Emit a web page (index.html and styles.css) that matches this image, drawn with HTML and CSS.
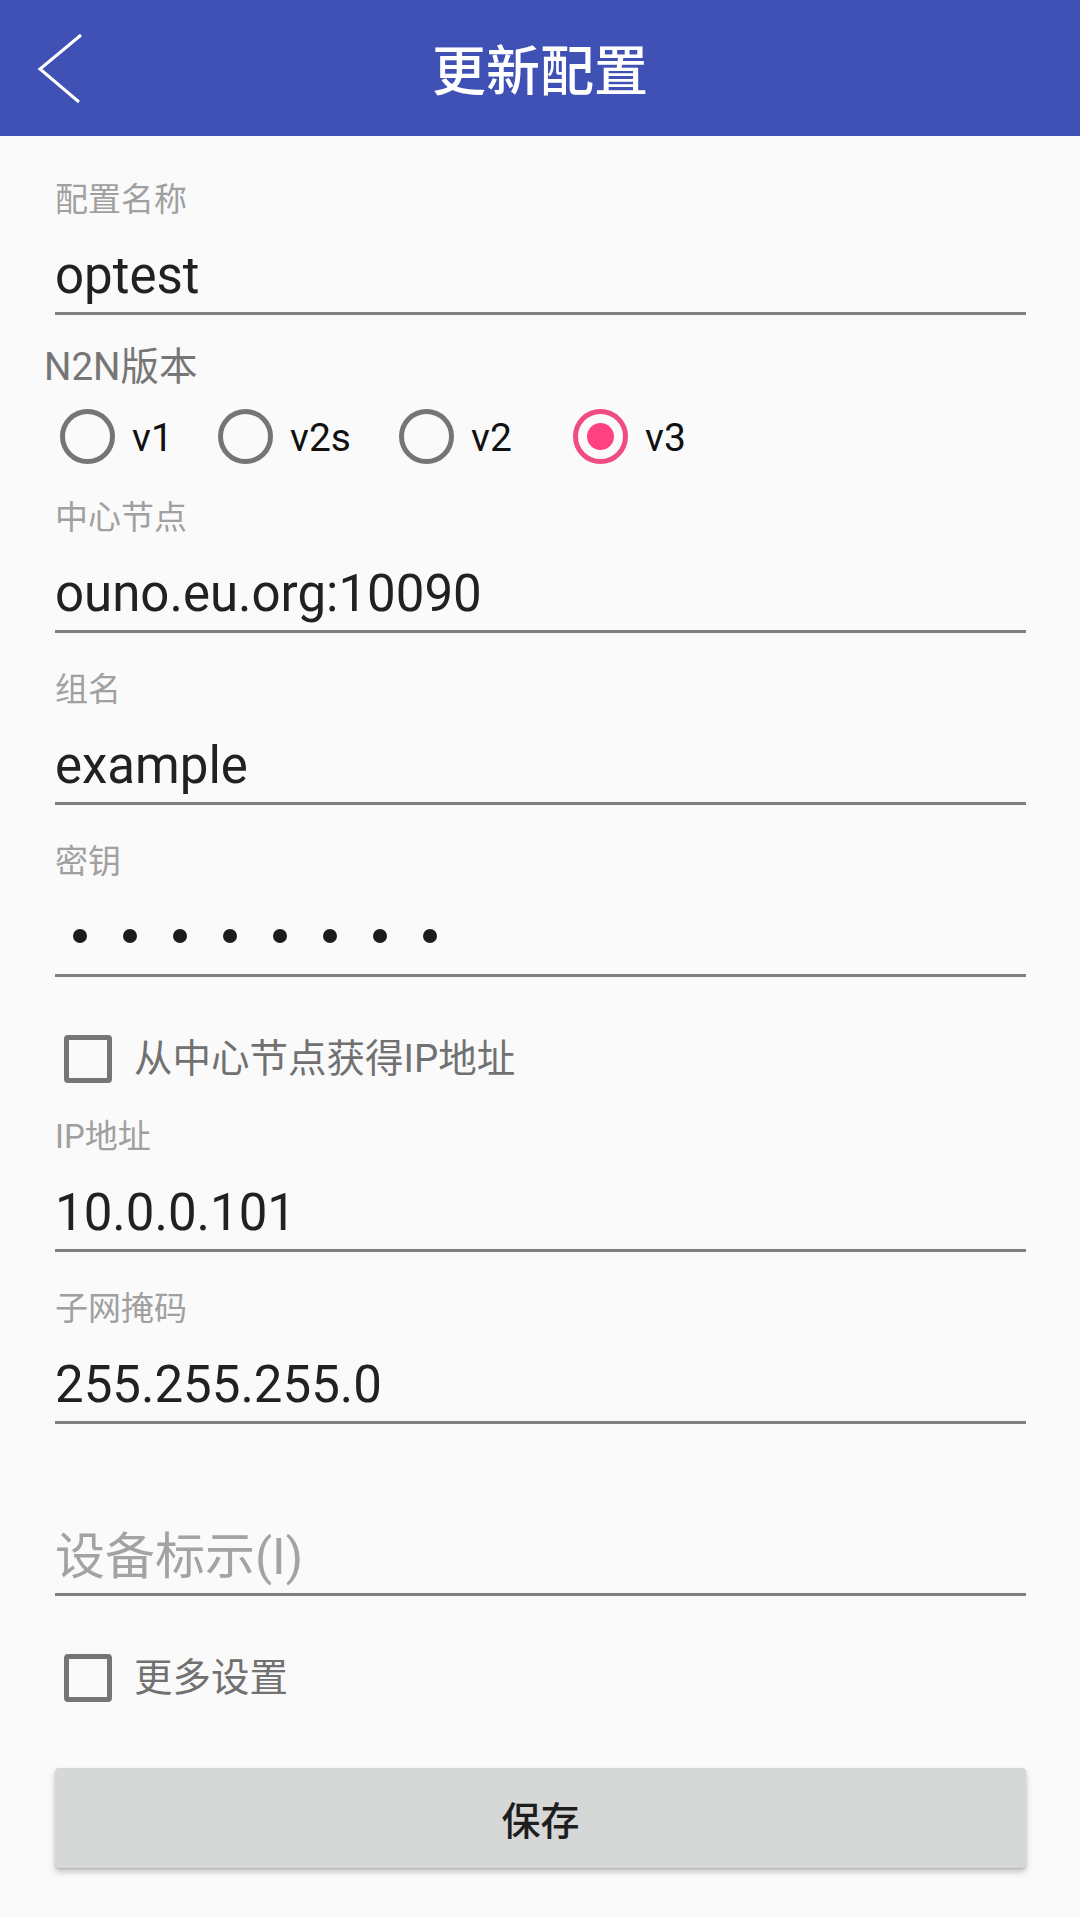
FILE: index.html
```html
<!DOCTYPE html>
<html lang="zh-CN">
<head>
<meta charset="utf-8">
<title>更新配置</title>
<link rel="stylesheet" href="styles.css">
</head>
<body>
<header class="appbar">
  <div class="appbar-left">
    <svg class="back" width="60" height="80" viewBox="0 0 60 80" aria-hidden="true">
      <polyline points="51,7 10,41 49,74" fill="none" stroke="#ffffff" stroke-width="3" stroke-linejoin="miter"/>
    </svg>
  </div>
  <h1 class="title">更新配置</h1>
  <div class="appbar-right"></div>
</header>

<main class="form">
  <div class="field">
    <div class="label">配置名称</div>
    <div class="input">optest</div>
  </div>

  <section class="version">
    <div class="version-label">N2N版本</div>
    <div class="radios">
      <div class="radio"><span class="circle"></span><span class="radio-text">v1</span></div>
      <div class="radio"><span class="circle"></span><span class="radio-text">v2s</span></div>
      <div class="radio"><span class="circle"></span><span class="radio-text">v2</span></div>
      <div class="radio"><span class="circle checked"><span class="dot"></span></span><span class="radio-text">v3</span></div>
    </div>
  </section>

  <div class="field">
    <div class="label">中心节点</div>
    <div class="input">ouno.eu.org:10090</div>
  </div>

  <div class="field">
    <div class="label">组名</div>
    <div class="input">example</div>
  </div>

  <div class="field">
    <div class="label">密钥</div>
    <div class="input password">
      <span class="pw-dot"></span><span class="pw-dot"></span><span class="pw-dot"></span><span class="pw-dot"></span><span class="pw-dot"></span><span class="pw-dot"></span><span class="pw-dot"></span><span class="pw-dot"></span>
    </div>
  </div>

  <div class="check-row">
    <span class="box"></span><span class="check-text">从中心节点获得IP地址</span>
  </div>

  <div class="field">
    <div class="label">IP地址</div>
    <div class="input">10.0.0.101</div>
  </div>

  <div class="field">
    <div class="label">子网掩码</div>
    <div class="input">255.255.255.0</div>
  </div>

  <div class="field">
    <div class="label"></div>
    <div class="input hint">设备标示(I)</div>
  </div>

  <div class="check-row">
    <span class="box"></span><span class="check-text">更多设置</span>
  </div>

  <button class="save" type="button">保存</button>
</main>
</body>
</html>
```

FILE: styles.css
```css
* { box-sizing: border-box; }

html, body {
  margin: 0;
  padding: 0;
}

body {
  background: #fafafa;
  font-family: Roboto, "Noto Sans CJK SC", sans-serif;
  width: 1080px;
  min-height: 1917px;
}

.appbar {
  height: 136px;
  background: #3f51b5;
  display: grid;
  grid-template-columns: 1fr auto 1fr;
  align-items: center;
}

.appbar-left {
  display: flex;
  align-items: center;
  padding-left: 30px;
}

.back { display: block; }

.title {
  margin: 0;
  color: #ffffff;
  font-family: "Noto Sans CJK SC", sans-serif;
  font-weight: 500;
  font-size: 54px;
  line-height: 70px;
  letter-spacing: 0;
}

.form {
  padding: 44px 54px 0 55px;
}

.field + .field {
  margin-top: 37px;
}

.version + .field {
  margin-top: 34px;
}

.check-row + .field {
  margin-top: 30px;
}

.label {
  font-size: 33px;
  line-height: 40px;
  height: 40px;
  color: #a0a0a0;
  margin-bottom: 26px;
}

.input {
  font-size: 51px;
  line-height: 60px;
  height: 69px;
  padding-bottom: 6px;
  color: #212121;
  border-bottom: 3px solid #7f7f7f;
}

.input.hint {
  color: #a3a3a3;
  font-size: 50px;
}

.input.password {
  display: flex;
  align-items: center;
  gap: 36px;
  padding-left: 18px;
  padding-bottom: 10px;
}

.pw-dot {
  width: 14px;
  height: 14px;
  border-radius: 50%;
  background: #1c1c1c;
}

.version {
  margin-top: 29px;
}

.version-label {
  font-size: 38.5px;
  line-height: 46px;
  color: #767676;
  margin-left: -11px;
}

.radios {
  margin-top: 18px;
  margin-left: 5px;
  display: grid;
  grid-template-columns: 158px 181px 174px auto;
  height: 56px;
  align-items: center;
}

.radio {
  display: flex;
  align-items: center;
  gap: 17px;
}

.circle {
  width: 55px;
  height: 55px;
  border-radius: 50%;
  border: 5px solid #757575;
  display: flex;
  align-items: center;
  justify-content: center;
  flex: none;
}

.circle.checked {
  border-color: #ee4c82;
}

.dot {
  width: 27px;
  height: 27px;
  border-radius: 50%;
  background: #ff4081;
}

.radio-text {
  font-size: 39px;
  line-height: 46px;
  color: #111111;
  position: relative;
  top: 2px;
}

.check-row {
  margin-top: 54px;
  height: 56px;
  display: flex;
  align-items: center;
  gap: 22px;
  padding-left: 9px;
}

.box {
  width: 48px;
  height: 48px;
  border: 5px solid #757575;
  border-radius: 4px;
  flex: none;
}

.check-text {
  font-size: 38.5px;
  line-height: 46px;
  color: #717171;
}

.save {
  display: block;
  width: 100%;
  margin-top: 62px;
  height: 100px;
  border: none;
  border-radius: 4px;
  background: #d6d7d7;
  box-shadow: 0 4px 6px rgba(0, 0, 0, 0.22), 0 1px 2px rgba(0, 0, 0, 0.12);
  font-family: "Noto Sans CJK SC", sans-serif;
  font-size: 39px;
  font-weight: 500;
  color: #1e1e1e;
  padding: 0;
}
```
